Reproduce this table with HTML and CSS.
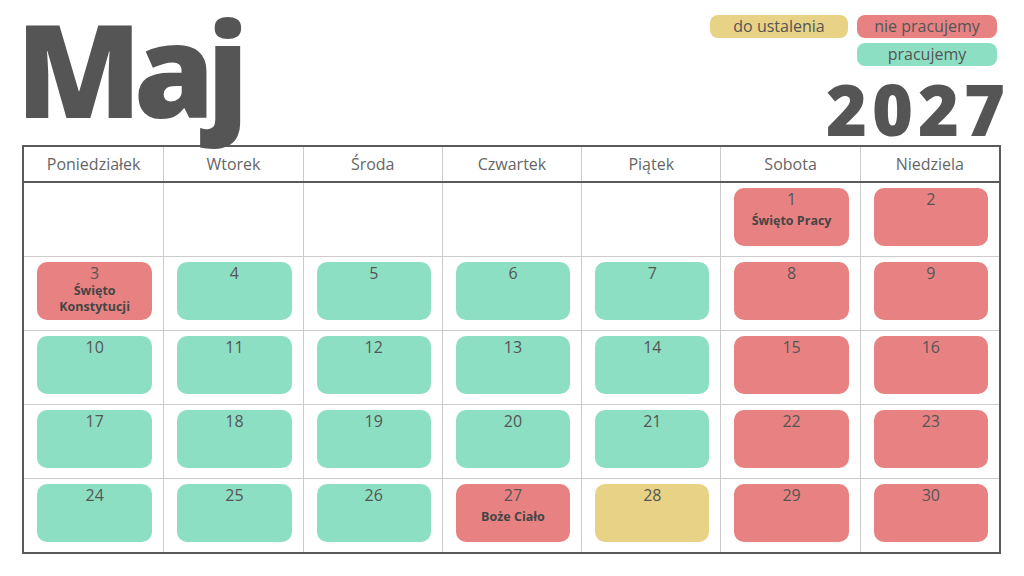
FILE: index.html
```html
<!DOCTYPE html>
<html lang="pl">
<head>
<meta charset="utf-8">
<title>Maj 2027</title>
<link rel="stylesheet" href="styles.css">
</head>
<body>
<div class="page">
  <header class="top">
    <h1 class="month">Maj</h1>
    <div class="side">
      <div class="legend">
        <span class="pill yellow">do ustalenia</span>
        <span class="pill red">nie pracujemy</span>
        <span class="pill green second">pracujemy</span>
      </div>
      <div class="year">2027</div>
    </div>
  </header>
  <section class="cal">
    <div class="head">
      <div class="hcell">Poniedziałek</div>
      <div class="hcell">Wtorek</div>
      <div class="hcell">Środa</div>
      <div class="hcell">Czwartek</div>
      <div class="hcell">Piątek</div>
      <div class="hcell">Sobota</div>
      <div class="hcell">Niedziela</div>
    </div>
    <div class="row">
      <div class="cell"></div>
      <div class="cell"></div>
      <div class="cell"></div>
      <div class="cell"></div>
      <div class="cell"></div>
      <div class="cell"><div class="day red"><span class="num">1</span><span class="hol">Święto Pracy</span></div></div>
      <div class="cell"><div class="day red"><span class="num">2</span></div></div>
    </div>
    <div class="row">
      <div class="cell"><div class="day red"><span class="num">3</span><span class="hol two">Święto<br>Konstytucji</span></div></div>
      <div class="cell"><div class="day green"><span class="num">4</span></div></div>
      <div class="cell"><div class="day green"><span class="num">5</span></div></div>
      <div class="cell"><div class="day green"><span class="num">6</span></div></div>
      <div class="cell"><div class="day green"><span class="num">7</span></div></div>
      <div class="cell"><div class="day red"><span class="num">8</span></div></div>
      <div class="cell"><div class="day red"><span class="num">9</span></div></div>
    </div>
    <div class="row">
      <div class="cell"><div class="day green"><span class="num">10</span></div></div>
      <div class="cell"><div class="day green"><span class="num">11</span></div></div>
      <div class="cell"><div class="day green"><span class="num">12</span></div></div>
      <div class="cell"><div class="day green"><span class="num">13</span></div></div>
      <div class="cell"><div class="day green"><span class="num">14</span></div></div>
      <div class="cell"><div class="day red"><span class="num">15</span></div></div>
      <div class="cell"><div class="day red"><span class="num">16</span></div></div>
    </div>
    <div class="row">
      <div class="cell"><div class="day green"><span class="num">17</span></div></div>
      <div class="cell"><div class="day green"><span class="num">18</span></div></div>
      <div class="cell"><div class="day green"><span class="num">19</span></div></div>
      <div class="cell"><div class="day green"><span class="num">20</span></div></div>
      <div class="cell"><div class="day green"><span class="num">21</span></div></div>
      <div class="cell"><div class="day red"><span class="num">22</span></div></div>
      <div class="cell"><div class="day red"><span class="num">23</span></div></div>
    </div>
    <div class="row last">
      <div class="cell"><div class="day green"><span class="num">24</span></div></div>
      <div class="cell"><div class="day green"><span class="num">25</span></div></div>
      <div class="cell"><div class="day green"><span class="num">26</span></div></div>
      <div class="cell"><div class="day red"><span class="num">27</span><span class="hol">Boże Ciało</span></div></div>
      <div class="cell"><div class="day yellow"><span class="num">28</span></div></div>
      <div class="cell"><div class="day red"><span class="num">29</span></div></div>
      <div class="cell"><div class="day red"><span class="num">30</span></div></div>
    </div>
  </section>
</div>
</body>
</html>
```

FILE: styles.css
```css
* { box-sizing: border-box; }
html, body { margin: 0; padding: 0; background: #fff; }
body {
  font-family: "Open Sans", "Liberation Sans", sans-serif;
  color: #555;
}
.page {
  width: 1024px;
  height: 576px;
  padding: 0 23px 0 22px;
  overflow: hidden;
}
.top {
  height: 145px;
  display: flex;
  justify-content: space-between;
  align-items: flex-start;
  position: relative;
  z-index: 2;
}
.month {
  margin: 3px 0 0 -6px;
  font-family: "Open Sans", sans-serif;
  font-weight: 800;
  font-size: 130px;
  line-height: 130px;
  height: 130px;
  letter-spacing: -8px;
  color: #555;
  padding: 0;
}
.side {
  display: flex;
  flex-direction: column;
  align-items: flex-end;
  padding-top: 15px;
}
.legend {
  display: grid;
  grid-template-columns: 138px 140px;
  column-gap: 9px;
  row-gap: 5px;
  margin-right: 4px;
}
.pill {
  height: 23px;
  border-radius: 8px;
  font-size: 16px;
  line-height: 23px;
  text-align: center;
  color: #555;
}
.pill.second { grid-column: 2; }
.yellow { background: #e8d285; }
.red { background: #e88282; }
.green { background: #8ddfc4; }
.year {
  font-family: "Open Sans", sans-serif;
  font-weight: 800;
  font-size: 70px;
  line-height: 60px;
  height: 60px;
  letter-spacing: 5px;
  margin-right: -9px;
  margin-top: 13px;
  color: #555;
}
.cal {
  border: 2px solid #5a5a5a;
  width: 979px;
  position: relative;
  z-index: 1;
}
.head, .row {
  display: grid;
  grid-template-columns: repeat(7, 1fr);
}
.head {
  height: 36px;
  border-bottom: 2px solid #5a5a5a;
}
.hcell {
  font-size: 16px;
  color: #666;
  display: flex;
  align-items: center;
  justify-content: center;
  border-left: 1px solid #ccc;
}
.hcell:first-child, .cell:first-child { border-left: none; }
.row {
  height: 74px;
  border-bottom: 1px solid #ccc;
}
.row.last { border-bottom: none; height: 73px; }
.cell {
  border-left: 1px solid #ccc;
  padding: 5px 11px 10px 13px;
}
.day {
  height: 58px;
  border-radius: 10px;
  display: flex;
  flex-direction: column;
  align-items: center;
  padding-top: 1px;
}
.num {
  font-size: 16px;
  line-height: 20px;
  color: #555;
}
.hol {
  font-weight: 700;
  font-size: 12.5px;
  line-height: 16px;
  text-align: center;
  color: #454545;
  margin-top: 4px;
}
.hol.two { margin-top: 0; }
```
